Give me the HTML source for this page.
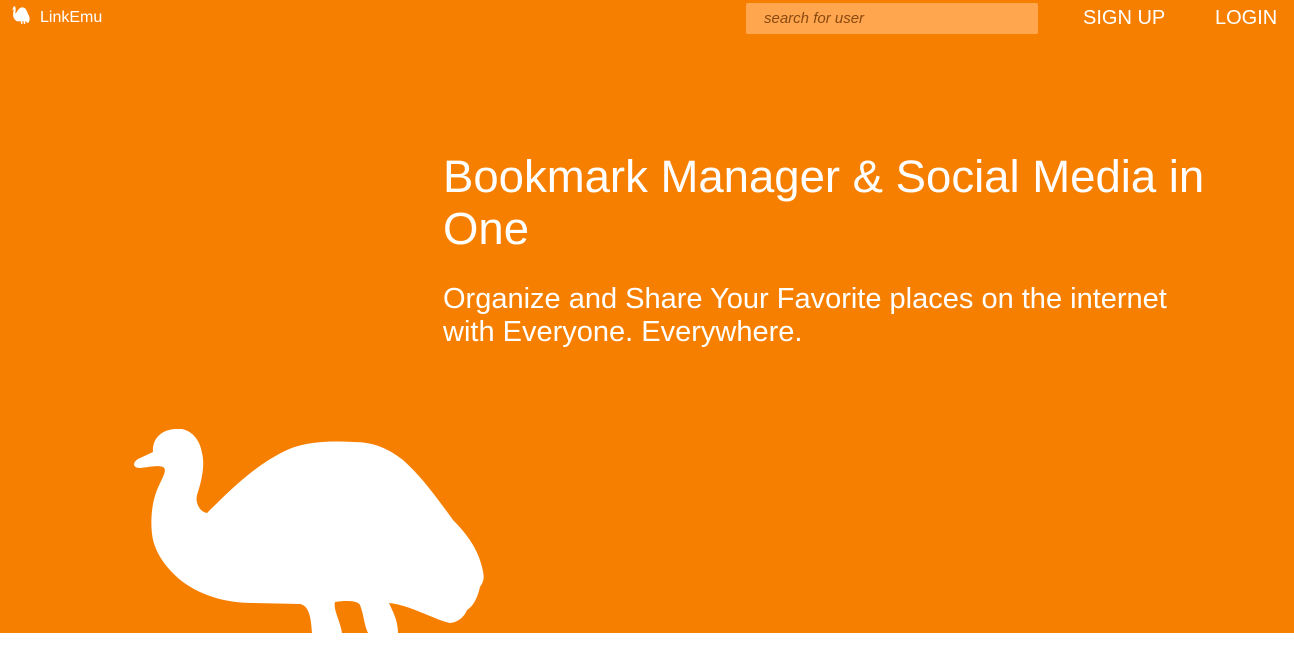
<!DOCTYPE html>
<html><head><meta charset="utf-8">
<style>
html,body{margin:0;padding:0;width:1294px;height:663px;background:#fff;overflow:hidden;font-family:"Liberation Sans",sans-serif;}
.hero{position:absolute;left:0;top:0;width:1294px;height:633px;background:#f77f00;}
.logo{position:absolute;left:12px;top:6px;}
.brand{position:absolute;left:40px;top:9px;color:#fff;font-size:16px;}
.search{position:absolute;left:746px;top:3px;width:292px;height:31px;background:#ffa64f;border-radius:2px;box-sizing:border-box;padding-left:18px;line-height:31px;font-style:italic;font-size:15px;color:#8a4a10;}
.nav{position:absolute;top:7px;color:#fff;font-size:20px;font-weight:300;}
h1{position:absolute;left:443px;top:151px;margin:0;width:790px;color:#fff;font-weight:300;font-size:45.5px;line-height:52px;}
h2{position:absolute;left:443px;top:283px;margin:0;width:760px;color:#fff;font-weight:400;font-size:29px;line-height:33px;}
</style></head><body>
<div class="hero">
<svg class="logo" width="18" height="18" viewBox="130 425 360 210" preserveAspectRatio="none"><path fill="#fff" d="M175 429 C160 430 152 440 153 452 L135 462 C132 468 150 468 163 467 C168 470 160 480 155 495 C150 520 152 545 163 560 C185 590 220 603 253 603 L300 604 C310 606 311 620 312 633 L342 633 C340 620 333 610 335 602 C348 600 358 601 360 605 C364 615 364 625 368 633 L398 633 C398 620 392 610 390 603 C410 605 435 620 450 623 C460 622 465 615 467 610 C475 605 478 595 480 587 C485 580 484 575 482 567 C478 550 468 535 453 520 C435 495 420 475 403 460 C385 446 370 442 353 442 C320 440 300 444 287 450 C255 465 230 490 207 513 C200 510 195 503 198 497 C202 480 205 465 202 453 C200 440 195 432 187 430 Z"/></svg>
<div class="brand">LinkEmu</div>
<div class="search">search for user</div>
<div class="nav" style="left:1083px">SIGN UP</div>
<div class="nav" style="left:1215px">LOGIN</div>
<h1>Bookmark Manager &amp; Social Media in One</h1>
<h2>Organize and Share Your Favorite places on the internet with Everyone. Everywhere.</h2>
<svg style="position:absolute;left:0;top:0" width="1294" height="633"><path fill="#fff" d="M175 429 C160 430 152 440 153 452 L138 459 C132 463 133 468 140 468 C150 467 158 465 163 467 C168 470 162 478 157 490 C151 505 150 525 153 540 C157 555 165 566 178 578 C198 595 225 603 253 603 L300 604 C310 606 311 620 312 633 L342 633 C340 620 333 610 335 602 C348 600 358 601 360 605 C364 615 364 625 368 633 L398 633 C398 620 392 610 389 603 C410 605 435 620 450 623 C460 622 465 615 467 610 C475 605 478 595 480 587 C485 580 484 575 482 567 C478 550 468 535 453 520 C435 495 420 475 403 460 C385 446 370 442 353 442 C320 440 300 444 287 450 C255 465 230 490 207 513 C200 512 195 503 197 495 C202 480 205 465 202 453 C200 440 192 431 182 429 Z"/></svg>
</div>
</body></html>
